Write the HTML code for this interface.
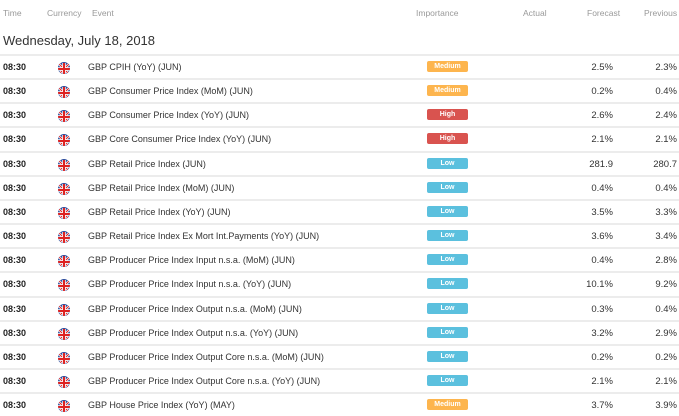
<!DOCTYPE html>
<html><head><meta charset="utf-8"><style>
*{margin:0;padding:0;box-sizing:border-box}
body{width:679px;height:416px;background:#fff;font-family:"Liberation Sans",sans-serif;overflow:hidden;position:relative;color:#333}
.h{position:absolute;top:8px;font-size:8.5px;color:#999}
.date{position:absolute;left:3px;top:33px;font-size:13px;color:#333}
.row{position:absolute;left:0;width:679px;height:24px;border-top:2px solid #ececec}
.t{position:absolute;left:3px;top:6px;font-size:9px;font-weight:bold;color:#222}
.f{position:absolute;left:58px;top:6px;width:12px;height:12px;border-radius:50%;background:#2a4a9a;overflow:hidden}
.e{position:absolute;left:88px;top:6px;font-size:9px;color:#333}
.b{position:absolute;left:427px;top:5px;width:41px;height:11px;border-radius:2px;color:#fff;font-size:7px;font-weight:bold;text-align:center;line-height:11px}
.m{background:#fdb54e}.hi{background:#d9534f}.l{background:#5bc0de}
.fc{position:absolute;right:66px;top:6px;font-size:9.5px}
.pv{position:absolute;right:2px;top:6px;font-size:9.5px}
</style></head><body>
<div class="h" style="left:3px">Time</div>
<div class="h" style="left:47px">Currency</div>
<div class="h" style="left:92px">Event</div>
<div class="h" style="left:416px">Importance</div>
<div class="h" style="left:523px">Actual</div>
<div class="h" style="left:587px">Forecast</div>
<div class="h" style="left:644px">Previous</div>
<div class="date">Wednesday, July 18, 2018</div>
<div id="rows"></div>
<script>
var d=[["GBP CPIH (YoY) (JUN)","m","Medium","2.5%","2.3%"],
["GBP Consumer Price Index (MoM) (JUN)","m","Medium","0.2%","0.4%"],
["GBP Consumer Price Index (YoY) (JUN)","hi","High","2.6%","2.4%"],
["GBP Core Consumer Price Index (YoY) (JUN)","hi","High","2.1%","2.1%"],
["GBP Retail Price Index (JUN)","l","Low","281.9","280.7"],
["GBP Retail Price Index (MoM) (JUN)","l","Low","0.4%","0.4%"],
["GBP Retail Price Index (YoY) (JUN)","l","Low","3.5%","3.3%"],
["GBP Retail Price Index Ex Mort Int.Payments (YoY) (JUN)","l","Low","3.6%","3.4%"],
["GBP Producer Price Index Input n.s.a. (MoM) (JUN)","l","Low","0.4%","2.8%"],
["GBP Producer Price Index Input n.s.a. (YoY) (JUN)","l","Low","10.1%","9.2%"],
["GBP Producer Price Index Output n.s.a. (MoM) (JUN)","l","Low","0.3%","0.4%"],
["GBP Producer Price Index Output n.s.a. (YoY) (JUN)","l","Low","3.2%","2.9%"],
["GBP Producer Price Index Output Core n.s.a. (MoM) (JUN)","l","Low","0.2%","0.2%"],
["GBP Producer Price Index Output Core n.s.a. (YoY) (JUN)","l","Low","2.1%","2.1%"],
["GBP House Price Index (YoY) (MAY)","m","Medium","3.7%","3.9%"]];
var flag='<svg width="12" height="12" viewBox="0 0 12 12"><rect width="12" height="12" fill="#2b4c9b"/><path d="M0 0L12 12M12 0L0 12" stroke="#fff" stroke-width="2.4"/><path d="M0 0L12 12M12 0L0 12" stroke="#d22" stroke-width="1"/><path d="M6 0V12M0 6H12" stroke="#fff" stroke-width="3.4"/><path d="M6 0V12M0 6H12" stroke="#d22" stroke-width="2"/></svg>';
var h='';d.forEach(function(r,i){var y=54+i*24.15;
h+='<div class="row" style="top:'+y+'px"><div class="t">08:30</div><div class="f">'+flag+'</div><div class="e">'+r[0]+'</div><div class="b '+r[1]+'">'+r[2]+'</div><div class="fc">'+r[3]+'</div><div class="pv">'+r[4]+'</div></div>';});
document.getElementById('rows').innerHTML=h;
</script>
</body></html>
